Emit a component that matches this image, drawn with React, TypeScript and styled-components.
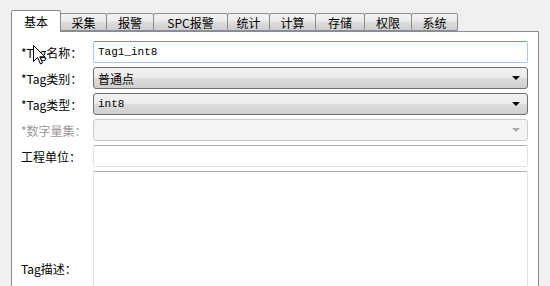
import styled, { createGlobalStyle } from 'styled-components';

const GlobalStyle = createGlobalStyle`
  html, body {
    margin: 0;
    padding: 0;
    background: #f0f0f0;
    overflow: hidden;
  }
  body {
    font-family: "Noto Sans CJK SC", "DejaVu Sans", sans-serif;
    font-size: 12px;
    color: #000;
  }
`;

const StyledPage = styled.div`
  position: relative;
  padding: 9px 11px 0 11px;
  width: 550px;
  height: 286px;
  box-sizing: border-box;
`;

const StyledTabStrip = styled.div`
  display: flex;
  align-items: flex-end;
  height: 22px;
  position: relative;
  z-index: 1;
`;

const StyledTab = styled.div<{ $active?: boolean; $w: number }>`
  box-sizing: border-box;
  width: ${(p) => p.$w}px;
  height: ${(p) => (p.$active ? 22 : 18)}px;
  margin-bottom: ${(p) => (p.$active ? -1 : 0)}px;
  margin-right: -1px;
  border: 1px solid #898c95;
  border-bottom: ${(p) => (p.$active ? 'none' : '1px solid #898c95')};
  border-radius: 2px 2px 0 0;
  background: ${(p) =>
    p.$active
      ? '#ffffff'
      : 'linear-gradient(to bottom, #f3f3f3 0%, #ebebeb 45%, #dddddd 50%, #cfcfcf 100%)'};
  display: flex;
  align-items: center;
  justify-content: center;
  line-height: 1;
  padding-top: ${(p) => (p.$active ? 0 : 1)}px;
  white-space: nowrap;
  z-index: ${(p) => (p.$active ? 2 : 0)};
`;

const StyledPanel = styled.div`
  box-sizing: border-box;
  background: #ffffff;
  border: 1px solid #898c95;
  border-bottom: none;
  height: 260px;
  padding: 9px 10px 0 9px;
  display: grid;
  grid-template-columns: 72px 1fr;
  grid-template-rows: repeat(5, 22px) 194px;
  row-gap: 4px;
  align-items: center;
  overflow: hidden;
`;

const StyledLabel = styled.div<{ $disabled?: boolean }>`
  color: ${(p) => (p.$disabled ? '#9a9a9a' : '#000')};
  white-space: nowrap;
`;

const StyledInput = styled.div<{ $focused?: boolean }>`
  box-sizing: border-box;
  height: 22px;
  border: 1px solid ${(p) => (p.$focused ? '#a9c9e6' : '#e2e3ea')};
  border-top-color: ${(p) => (p.$focused ? '#569de5' : '#abadb3')};
  border-radius: 2px;
  background: #fff;
  padding: 0 4px;
  display: flex;
  align-items: center;
`;

const StyledSelect = styled.div<{ $disabled?: boolean }>`
  box-sizing: border-box;
  height: 22px;
  border: 1px solid ${(p) => (p.$disabled ? '#c9cbcd' : '#707070')};
  border-radius: 3px;
  background: ${(p) =>
    p.$disabled
      ? '#f4f4f4'
      : 'linear-gradient(to bottom, #f2f2f2 0%, #ebebeb 50%, #dddddd 51%, #cfcfcf 100%)'};
  padding: 0 4px;
  display: flex;
  align-items: center;
  justify-content: space-between;
`;

const StyledArrow = styled.span<{ $disabled?: boolean }>`
  width: 0;
  height: 0;
  margin-right: 3px;
  border-left: 4px solid transparent;
  border-right: 4px solid transparent;
  border-top: 4px solid ${(p) => (p.$disabled ? '#a8a8a8' : '#000')};
`;

const StyledMono = styled.span`
  font-family: "Liberation Mono", "Noto Sans CJK SC", monospace;
  font-size: 11px;
`;

const StyledTextArea = styled.div`
  box-sizing: border-box;
  align-self: stretch;
  border: 1px solid #e2e3ea;
  border-top-color: #abadb3;
  border-radius: 2px;
  background: #fff;
`;

const StyledCursor = styled.svg`
  position: absolute;
  left: 33px;
  top: 45px;
`;

const tabs = [
  { name: '基本', w: 50 },
  { name: '采集', w: 47 },
  { name: '报警', w: 48 },
  { name: 'SPC报警', w: 75 },
  { name: '统计', w: 43 },
  { name: '计算', w: 47 },
  { name: '存储', w: 50 },
  { name: '权限', w: 48 },
  { name: '系统', w: 47 },
];

export default function App() {
  return (
    <StyledPage>
      <GlobalStyle />
      <StyledTabStrip>
        {tabs.map((t, i) => (
          <StyledTab key={t.name} $active={i === 0} $w={t.w}>
            {t.name}
          </StyledTab>
        ))}
      </StyledTabStrip>
      <StyledPanel>
        <StyledLabel>*Tag名称：</StyledLabel>
        <StyledInput $focused>
          <StyledMono>Tag1_int8</StyledMono>
        </StyledInput>

        <StyledLabel>*Tag类别：</StyledLabel>
        <StyledSelect>
          <span>普通点</span>
          <StyledArrow />
        </StyledSelect>

        <StyledLabel>*Tag类型：</StyledLabel>
        <StyledSelect>
          <StyledMono>int8</StyledMono>
          <StyledArrow />
        </StyledSelect>

        <StyledLabel $disabled>*数字量集：</StyledLabel>
        <StyledSelect $disabled>
          <span />
          <StyledArrow $disabled />
        </StyledSelect>

        <StyledLabel>工程单位：</StyledLabel>
        <StyledInput />

        <StyledLabel>Tag描述：</StyledLabel>
        <StyledTextArea />
      </StyledPanel>
      <StyledCursor width="13" height="20" viewBox="0 0 13 20">
        <path
          d="M0.5 0.5 L0.5 16.5 L4.5 12.5 L7.5 19 L9.5 18 L6.8 11.8 L12 11.8 Z"
          fill="#fff"
          stroke="#000"
          strokeWidth="1"
        />
      </StyledCursor>
    </StyledPage>
  );
}
